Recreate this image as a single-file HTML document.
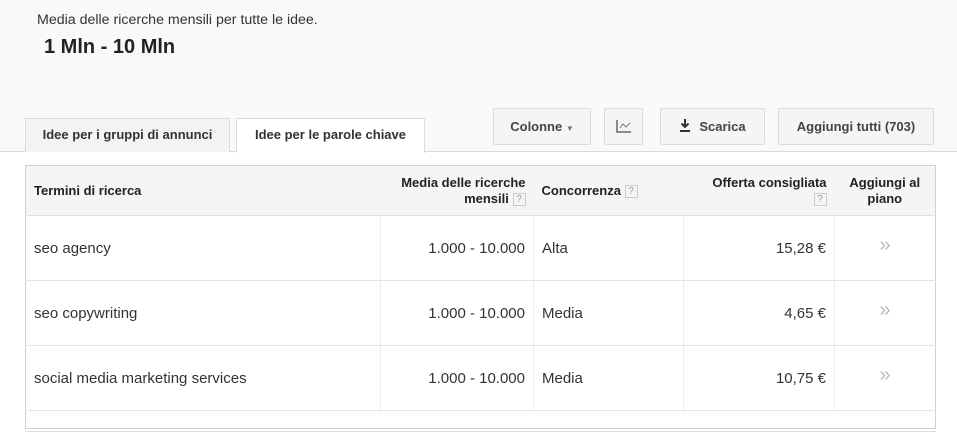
<!DOCTYPE html>
<html><head><meta charset="utf-8"><style>
*{box-sizing:border-box;margin:0;padding:0}
body{width:957px;height:434px;overflow:hidden;background:#fff;font-family:"Liberation Sans",Arial,sans-serif;color:#222;position:relative}
.top{position:absolute;left:0;top:0;width:957px;height:152px;background:#f9f9f9;border-bottom:1px solid #d9d9d9}
.a{position:absolute}
.sub{left:37px;top:12px;font-size:14.2px;color:#333}
.big{left:44px;top:36px;font-size:20px;font-weight:bold;color:#222}
.tab{position:absolute;top:118px;height:34px;border:1px solid #dcdcdc;border-bottom:none;font-size:13px;font-weight:bold;color:#333;text-align:center;line-height:32px}
.btn{position:absolute;top:108px;height:37px;border:1px solid #dcdcdc;border-radius:2px;background:#f5f5f5;font-size:13px;font-weight:bold;color:#444;text-align:center;line-height:35px}
table{position:absolute;left:25px;top:165px;width:911px;border-collapse:collapse;border:1px solid #d0d0d0;font-size:15px}
th{background:#f5f5f5;font-size:13px;font-weight:bold;color:#222;height:50px;border-bottom:1px solid #e0e0e0;padding:0 8px;vertical-align:middle;line-height:16px}
td{height:65px;border-bottom:1px solid #e5e5e5;border-left:1px solid #ececec;padding:0 8px;color:#333}
td:first-child{border-left:none}
.q{display:inline-block;width:13px;height:13px;border:1px solid #ccc;font-size:10px;color:#999;line-height:11px;text-align:center;font-weight:normal;vertical-align:middle}
.r{text-align:right}
.ch{color:#bbb;text-align:center;font-size:20px;padding-bottom:6px}
</style></head><body>
<div class="top"></div>
<div class="a sub">Media delle ricerche mensili per tutte le idee.</div>
<div class="a big">1 Mln - 10 Mln</div>
<div class="tab" style="left:25px;width:205px;background:#f3f3f3">Idee per i gruppi di annunci</div>
<div class="tab" style="left:236px;width:189px;height:35px;background:#fff">Idee per le parole chiave</div>
<div class="btn" style="left:493px;width:98px">Colonne <span style="font-size:8px;color:#777">▼</span></div>
<div class="btn" style="left:604px;width:39px"><svg width="16" height="14" viewBox="0 0 16 14" style="margin-top:10px"><path d="M1 1V13H15" stroke="#666" stroke-width="1.5" fill="none"/><path d="M4 9L7 5L10 8L14 4" stroke="#888" stroke-width="1.2" fill="none"/></svg></div>
<div class="btn" style="left:660px;width:105px"><span style="display:inline-block;vertical-align:middle;margin-right:8px"><svg width="12" height="14" viewBox="0 0 12 14"><path d="M6 1V9M2.5 5.5L6 9L9.5 5.5" stroke="#333" stroke-width="2" fill="none"/><path d="M1 13H11" stroke="#333" stroke-width="2"/></svg></span>Scarica</div>
<div class="btn" style="left:778px;width:156px">Aggiungi tutti (703)</div>
<table>
<tr><th style="text-align:left;width:355px">Termini di ricerca</th><th class="r" style="width:153px">Media delle ricerche<br>mensili <span class="q">?</span></th><th style="text-align:left;width:150px">Concorrenza <span class="q">?</span></th><th class="r" style="width:151px">Offerta consigliata<br><span class="q">?</span></th><th style="text-align:center">Aggiungi al<br>piano</th></tr>
<tr><td>seo agency</td><td class="r">1.000 - 10.000</td><td>Alta</td><td class="r">15,28 €</td><td class="ch">»</td></tr>
<tr><td>seo copywriting</td><td class="r">1.000 - 10.000</td><td>Media</td><td class="r">4,65 €</td><td class="ch">»</td></tr>
<tr><td>social media marketing services</td><td class="r">1.000 - 10.000</td><td>Media</td><td class="r">10,75 €</td><td class="ch">»</td></tr>
<tr><td colspan="5" style="height:18px;border-bottom:none"></td></tr>
</table>
<div class="a" style="left:25px;top:431px;width:911px;height:1px;background:#ddd"></div>
</body></html>
